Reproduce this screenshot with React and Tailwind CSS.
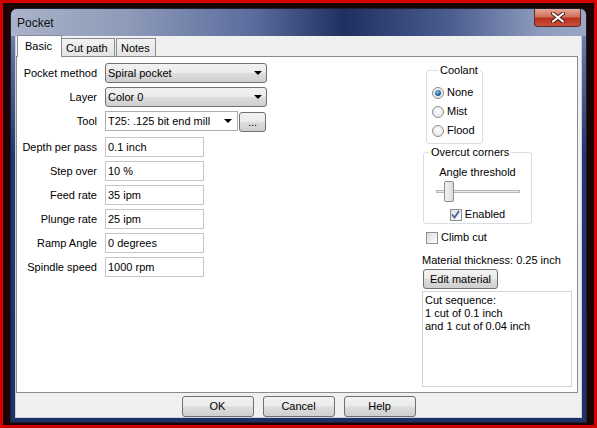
import React from "react";

const btn =
  "flex items-center justify-center border border-[#707070] rounded-[3px] bg-[linear-gradient(#f2f2f2,#ebebeb_48%,#dddddd_52%,#cfcfcf)]";

function Arrow() {
  return (
    <svg width="8" height="4" viewBox="0 0 8 4" className="shrink-0">
      <polygon points="0,0 8,0 4,4" fill="#000" />
    </svg>
  );
}

function Select({ value, w }) {
  return (
    <div className={`${btn} ${w} h-[20px] !justify-start pl-[2px] pr-[4px]`}>
      <span className="flex-1">{value}</span>
      <Arrow />
    </div>
  );
}

function Field({ value }) {
  return (
    <div className="flex items-center w-[99px] h-[20px] border border-[#c3c6cc] bg-white pl-[2px]">
      {value}
    </div>
  );
}

function Row({ label, children, tall }) {
  return (
    <div className={`flex ${tall ? "h-[22px]" : "h-[20px]"}`}>
      <div className="w-[80px] h-[20px] flex items-center justify-end">{label}</div>
      <div className="ml-[8px] flex">{children}</div>
    </div>
  );
}

function Radio({ label, on }) {
  return (
    <div className="flex items-center h-[19px]">
      <div className="w-[12px] h-[12px] rounded-full border border-[#8f8f8f] bg-[radial-gradient(circle_at_50%_40%,#ffffff,#dcdcdc)] flex items-center justify-center">
        {on && (
          <div className="w-[6px] h-[6px] rounded-full bg-[radial-gradient(circle_at_40%_35%,#8fc6ef,#1d5c93_60%,#0f3f6c)]" />
        )}
      </div>
      <span className="ml-[3px]">{label}</span>
    </div>
  );
}

function Check({ label, on }) {
  return (
    <div className="flex items-center h-[13px]">
      <div className="w-[12px] h-[12px] border border-[#8f8f8f] bg-[linear-gradient(135deg,#dcdcdc,#ffffff)] flex items-center justify-center">
        {on && (
          <svg width="9" height="9" viewBox="0 0 9 9">
            <path d="M1 4.5 L3.5 7.5 L8 1" fill="none" stroke="#4a5f97" strokeWidth="1.8" />
          </svg>
        )}
      </div>
      <span className="ml-[3px]">{label}</span>
    </div>
  );
}

export default function App() {
  return (
    <div className="w-[597px] h-[428px] overflow-hidden bg-[#1c0404] border-[3px] border-[#d40000] pl-[7px] pt-[5px] font-['Liberation_Sans',Arial,sans-serif] text-[11px] leading-[13px] text-black">
      <div className="w-[577px] h-[415px] rounded-t-[7px] border border-[#1a1f33] bg-[linear-gradient(180deg,#8d99b8_0%,#5c6d9a_12%,#24386c_35%,#1e3266_100%)] flex flex-col">
        {/* title bar */}
        <div className="relative h-[27px] shrink-0 rounded-t-[6px] bg-[linear-gradient(90deg,#a9b3c9_0%,#8e9bb9_20%,#5b6c9d_42%,#1f2f60_58%,#4a5b8e_76%,#8d9bbd_92%,#9ba7c4_100%)] flex items-center pl-[6px]">
          <span className="text-[12px] text-[#111] pt-[1px]">Pocket</span>
          <div className="absolute right-[5px] top-0 w-[47px] h-[18px] rounded-b-[4px] border border-t-0 border-[#5a2a2a] bg-[linear-gradient(#e6a898,#d0705c_45%,#b8321e_55%,#c9503a)] flex items-center justify-center">
            <svg width="14" height="11" viewBox="0 0 14 11">
              <path d="M2 1.5 L12 9.5 M12 1.5 L2 9.5" stroke="#4a1a14" strokeWidth="4" strokeLinecap="round" />
              <path d="M2 1.5 L12 9.5 M12 1.5 L2 9.5" stroke="#fff" strokeWidth="2.2" strokeLinecap="round" />
            </svg>
          </div>
        </div>

        {/* client */}
        <div className="ml-[5px] w-[565px] h-[381px] bg-[#f0f0f0] outline outline-1 outline-[#c8d1e0] flex flex-col">
          {/* tabs */}
          <div className="flex items-end h-[21px] ml-[1px] relative z-10 -mb-px">
            <div className="w-[45px] h-[22px] bg-white border border-b-0 border-[#898c95] pl-[7px] pt-[4px]">Basic</div>
            <div className="w-[53px] h-[19px] border border-l-0 border-[#898c95] bg-[linear-gradient(#f2f2f2,#e4e4e4)] pl-[4px] pt-[3px]">Cut path</div>
            <div className="w-[40px] h-[19px] ml-[1px] border border-[#898c95] bg-[linear-gradient(#f2f2f2,#e4e4e4)] pl-[4px] pt-[3px]">Notes</div>
          </div>

          {/* panel */}
          <div className="w-[562px] h-[337px] bg-white border border-[#898c95] flex">
            <div className="w-[405px] pt-[6px] flex flex-col gap-[4px]">
              <Row label="Pocket method">
                <Select value="Spiral pocket" w="w-[162px]" />
              </Row>
              <Row label="Layer">
                <Select value="Color 0" w="w-[162px]" />
              </Row>
              <Row label="Tool" tall>
                <div className="flex items-center w-[133px] h-[20px] border border-[#abadb3] bg-white pl-[2px] pr-[5px]">
                  <span className="flex-1">T25: .125 bit end mill</span>
                  <Arrow />
                </div>
                <div className={`${btn} w-[27px] h-[20px] mt-[1px] ml-[1px] leading-[8px]`}>...</div>
              </Row>
              <Row label="Depth per pass">
                <Field value="0.1 inch" />
              </Row>
              <Row label="Step over">
                <Field value="10 %" />
              </Row>
              <Row label="Feed rate">
                <Field value="35 ipm" />
              </Row>
              <Row label="Plunge rate">
                <Field value="25 ipm" />
              </Row>
              <Row label="Ramp Angle">
                <Field value="0 degrees" />
              </Row>
              <Row label="Spindle speed">
                <Field value="1000 rpm" />
              </Row>
            </div>

            {/* right column */}
            <div className="w-[150px] pt-[7px] flex flex-col">
              <fieldset className="ml-[4px] w-[57px] h-[80px] border border-[#d5dfe5] rounded-[3px] pl-[5px] pt-[6px]">
                <legend className="ml-[6px] px-[2px] leading-[13px]">Coolant</legend>
                <Radio label="None" on />
                <Radio label="Mist" />
                <Radio label="Flood" />
              </fieldset>

              <fieldset className="ml-[1px] mt-[2px] w-[109px] h-[78px] border border-[#d5dfe5] rounded-[3px] pt-[7px] flex flex-col items-center">
                <legend className="ml-[5px] px-[2px] leading-[13px]">Overcut corners</legend>
                <div className="text-center">Angle threshold</div>
                <div className="relative w-[84px] h-[21px] mt-[2px]">
                  <div className="absolute left-0 right-0 top-[9px] h-[3px] border border-[#b6b6b6] bg-[#e7eaea]" />
                  <div className="absolute left-[8px] top-0 w-[10px] h-[21px] rounded-[2px] border border-[#8c8c8c] bg-[linear-gradient(90deg,#f4f4f4,#dcdcdc)]" />
                </div>
                <div className="mt-[6px]">
                  <Check label="Enabled" on />
                </div>
              </fieldset>

              <div className="ml-[4px] mt-[7px]">
                <Check label="Climb cut" />
              </div>

              <div className="mt-[10px] whitespace-nowrap">Material thickness: 0.25 inch</div>
              <div className={`${btn} ml-[1px] mt-[2px] w-[75px] h-[20px]`}>Edit material</div>
              <div className="mt-[2px] w-[150px] h-[96px] border border-[#d0d3d8] bg-white pl-[2px] pt-[2px]">
                <div>Cut sequence:</div>
                <div>1 cut of 0.1 inch</div>
                <div>and 1 cut of 0.04 inch</div>
              </div>
            </div>
          </div>

          {/* footer */}
          <div className="flex-1 flex justify-center gap-[9px] pt-[3px]">
            <div className={`${btn} w-[72px] h-[21px]`}>OK</div>
            <div className={`${btn} w-[72px] h-[21px]`}>Cancel</div>
            <div className={`${btn} w-[72px] h-[21px]`}>Help</div>
          </div>
        </div>
      </div>
    </div>
  );
}
